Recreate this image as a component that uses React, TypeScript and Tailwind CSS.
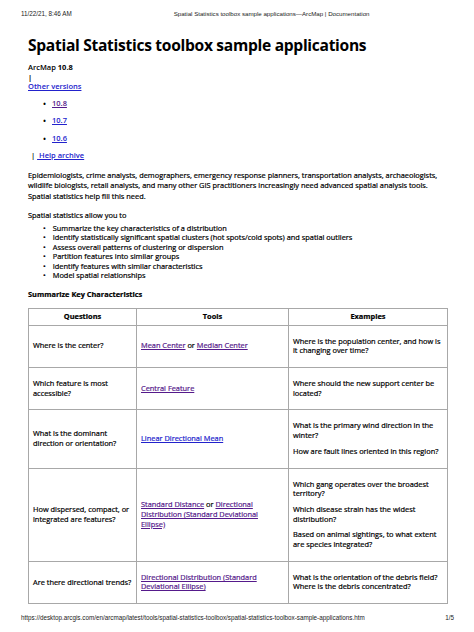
import React from "react";

const V = "text-[#551a8b] underline";
const B = "text-[#2222cc] underline";

function Cell({ children, cls = "" }: { children: React.ReactNode; cls?: string }) {
  return (
    <td className={`border border-[#a8a8a8] pl-[4px] pr-[4px] py-[11px] align-middle ${cls}`}>{children}</td>
  );
}

export default function App() {
  return (
    <div
      className="w-[474px] h-[632px] bg-white text-black overflow-hidden flex flex-col"
      style={{ fontFamily: '"Open Sans", "Noto Sans", sans-serif' }}
    >
      <div
        className="flex pt-[10px] pl-[21px] leading-[7px] text-[#222]"
        style={{ fontFamily: '"Liberation Sans", Arial, sans-serif' }}
      >
        <span className="text-[6.3px]">11/22/21, 8:46 AM</span>
        <span className="ml-[102px] text-[6.15px]">Spatial Statistics toolbox sample applications—ArcMap | Documentation</span>
      </div>

      <div className="pl-[28px] pr-[27px] flex flex-col">
        <h1 className="mt-[16px] text-[15.6px] leading-[24px] font-bold tracking-[-0.3px]">
          Spatial Statistics toolbox sample applications
        </h1>

        <div className="mt-[6px] text-[7.5px] leading-[9.5px] font-semibold">
          ArcMap <span className="font-bold">10.8</span>
        </div>
        <div className="text-[7.5px] leading-[9.5px] font-bold">|</div>
        <div className="text-[7.5px] leading-[9.5px] font-semibold">
          <span className={B}>Other versions</span>
        </div>
        <ul className="mt-[7px] ml-[15px] flex flex-col gap-[8px] text-[7.5px] leading-[9.5px] font-semibold">
          <li className="flex items-center gap-[6px]">
            <span className="text-[8px]">•</span>
            <span className={V}>10.8</span>
          </li>
          <li className="flex items-center gap-[6px]">
            <span className="text-[8px]">•</span>
            <span className={B}>10.7</span>
          </li>
          <li className="flex items-center gap-[6px]">
            <span className="text-[8px]">•</span>
            <span className={B}>10.6</span>
          </li>
        </ul>
        <div className="mt-[8px] ml-[3px] text-[7.5px] leading-[9.5px] font-semibold">
          | <span className={B}>&nbsp;Help archive</span>
        </div>

        <div className="flex flex-col [-webkit-text-stroke:0.2px]">
          <p className="mt-[9px] text-[7.4px] leading-[10.5px] font-medium">
            Epidemiologists, crime analysts, demographers, emergency response planners, transportation analysts, archaeologists,
            wildlife biologists, retail analysts, and many other GIS practitioners increasingly need advanced spatial analysis
            tools. Spatial statistics help fill this need.
          </p>

          <p className="mt-[8.5px] text-[7.4px] leading-[10.5px] font-medium">Spatial statistics allow you to</p>

          <ul className="mt-[4px] ml-[15px] text-[7.4px] leading-[9.4px] font-medium">
            {[
              "Summarize the key characteristics of a distribution",
              "Identify statistically significant spatial clusters (hot spots/cold spots) and spatial outliers",
              "Assess overall patterns of clustering or dispersion",
              "Partition features into similar groups",
              "Identify features with similar characteristics",
              "Model spatial relationships",
            ].map((t) => (
              <li key={t} className="flex gap-[7px]">
                <span>•</span>
                <span>{t}</span>
              </li>
            ))}
          </ul>

          <div className="mt-[9px] text-[7.4px] leading-[10px] font-bold">Summarize Key Characteristics</div>

          <table className="mt-[8.5px] w-[419px] border-collapse text-[7.4px] leading-[9.7px] font-medium table-fixed">
            <colgroup>
              <col className="w-[108px]" />
              <col className="w-[152px]" />
              <col className="w-[159px]" />
            </colgroup>
            <thead>
              <tr>
                <th className="border border-[#a8a8a8] py-[3px] font-bold text-center">Questions</th>
                <th className="border border-[#a8a8a8] py-[3px] font-bold text-center">Tools</th>
                <th className="border border-[#a8a8a8] py-[3px] font-bold text-center">Examples</th>
              </tr>
            </thead>
            <tbody>
              <tr>
                <Cell>Where is the center?</Cell>
                <Cell cls="pr-[18px]">
                  <span className={V}>Mean Center</span> or <span className={V}>Median Center</span>
                </Cell>
                <Cell>Where is the population center, and how is it changing over time?</Cell>
              </tr>
              <tr>
                <Cell>Which feature is most accessible?</Cell>
                <Cell cls="pr-[18px]">
                  <span className={V}>Central Feature</span>
                </Cell>
                <Cell>Where should the new support center be located?</Cell>
              </tr>
              <tr>
                <Cell>What is the dominant direction or orientation?</Cell>
                <Cell cls="pr-[18px]">
                  <span className={B}>Linear Directional Mean</span>
                </Cell>
                <Cell>
                  <p>What is the primary wind direction in the winter?</p>
                  <p className="mt-[6px]">How are fault lines oriented in this region?</p>
                </Cell>
              </tr>
              <tr>
                <Cell>How dispersed, compact, or integrated are features?</Cell>
                <Cell cls="pr-[18px]">
                  <span className={V}>Standard Distance</span> or{" "}
                  <span className={V}>Directional Distribution (Standard Deviational Ellipse)</span>
                </Cell>
                <Cell>
                  <p>Which gang operates over the broadest territory?</p>
                  <p className="mt-[6px]">Which disease strain has the widest distribution?</p>
                  <p className="mt-[6px]">Based on animal sightings, to what extent are species integrated?</p>
                </Cell>
              </tr>
              <tr>
                <Cell>Are there directional trends?</Cell>
                <Cell cls="pr-[18px]">
                  <span className={V}>Directional Distribution (Standard Deviational Ellipse)</span>
                </Cell>
                <Cell>
                  <p>What is the orientation of the debris field?</p>
                  <p>Where is the debris concentrated?</p>
                </Cell>
              </tr>
            </tbody>
          </table>
        </div>
      </div>

      <div
        className="mt-auto mb-[11px] flex justify-between pl-[21px] pr-[20px] text-[6.3px] leading-[7px] text-[#222]"
        style={{ fontFamily: '"Liberation Sans", Arial, sans-serif' }}
      >
        <span>https://desktop.arcgis.com/en/arcmap/latest/tools/spatial-statistics-toolbox/spatial-statistics-toolbox-sample-applications.htm</span>
        <span>1/5</span>
      </div>
    </div>
  );
}
